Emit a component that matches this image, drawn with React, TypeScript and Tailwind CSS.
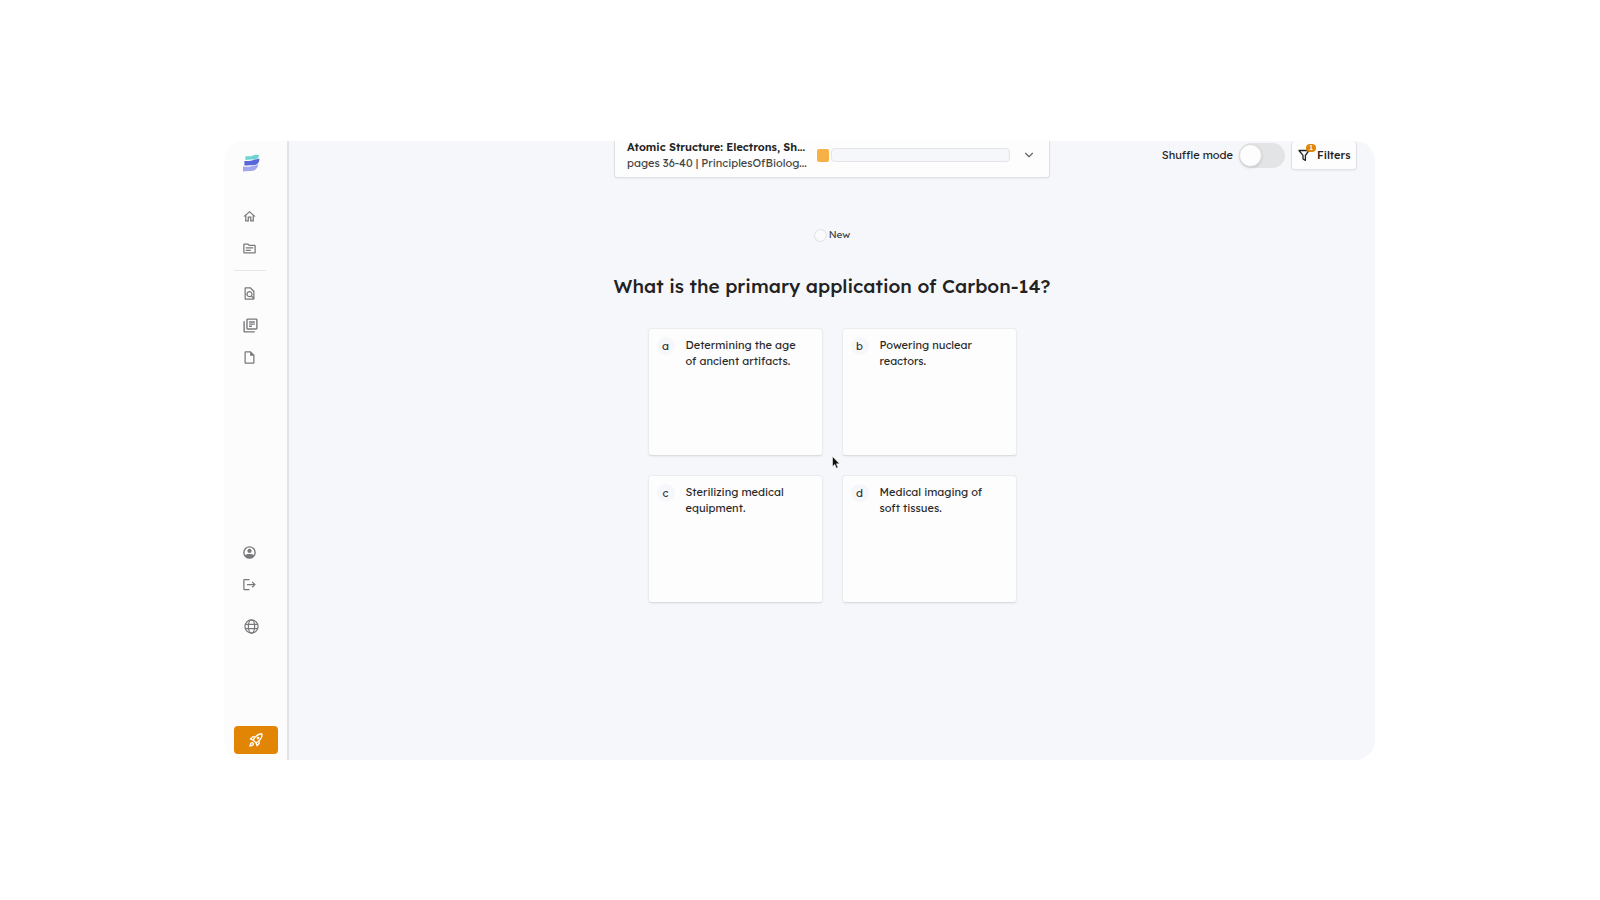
import React, { useState } from 'react';
import { ChevronDown } from 'lucide-react';
import {
  MdLogout,
  MdOutlineFindInPage,
  MdOutlineHome,
  MdOutlineInsertDriveFile,
  MdOutlineLibraryBooks,
  MdOutlineRocketLaunch,
  MdOutlineTopic,
} from 'react-icons/md';

interface Answer {
  id: string;
  text: string;
}

const ANSWERS: Answer[] = [
  { id: 'a', text: 'Determining the age of ancient artifacts.' },
  { id: 'b', text: 'Powering nuclear reactors.' },
  { id: 'c', text: 'Sterilizing medical equipment.' },
  { id: 'd', text: 'Medical imaging of soft tissues.' },
];

const Logo: React.FC = () => (
  <svg viewBox="0 0 18 18" className="w-[18px] h-[18px]" aria-hidden="true">
    <path d="M3.4 2.2C7 2.600 9 2.200 11 1.400C13 .6 15.4.4 16.8 1.2C17 3 16.4 4.700 13.6 5.200C10.5 5.700 7 5.300 3.400 6Z" fill="#6fd3d3" />
    <path d="M2.4 7C7 7.300 9 6.800 11.4 6C13.4 5.200 15.4 5 17.4 4.400C17.6 7.600 16.200 10.400 13 10.900C9.600 11.400 6 11 2.400 11.600Z" fill="#5868d8" />
    <path d="M1 12.600C5.400 13 8.400 12.800 10.800 12.100C12.800 11.500 14.800 11.200 16.400 10.200C15.800 13.400 14 16.200 11 16.700C7.800 17.200 4.400 16.800 1 17.400Z" fill="#a3a6ea" />
  </svg>
);

const AccountIcon: React.FC = () => (
  <svg viewBox="0 0 24 24" className="w-[15px] h-[15px]" fill="none" stroke="currentColor" strokeWidth="2.2" aria-hidden="true">
    <circle cx="12" cy="12" r="9" />
    <circle cx="12" cy="9.5" r="3.4" fill="currentColor" stroke="none" />
    <path d="M4.5 16.4C8 13.9 16 13.9 19.5 16.4C17.5 19.5 15 21 12 21S6.5 19.5 4.5 16.4Z" fill="currentColor" stroke="none" />
  </svg>
);

const GlobeIcon: React.FC = () => (
  <svg viewBox="0 0 24 24" className="w-[15px] h-[15px]" fill="none" stroke="currentColor" strokeWidth="2" aria-hidden="true">
    <circle cx="12" cy="12" r="10.5" />
    <ellipse cx="12" cy="12" rx="5" ry="10.5" />
    <path d="M2.5 8.5H21.5M2.5 15.5H21.5" />
  </svg>
);

const FilterIcon: React.FC = () => (
  <svg viewBox="0 0 14 14" className="w-3.5 h-3.5" fill="none" stroke="currentColor" strokeWidth="1.3" strokeLinejoin="round" aria-hidden="true">
    <path d="M1 2.5H11L7.4 7.4V12.4L5 11V7.400Z" />
  </svg>
);

interface NavButtonProps {
  label: string;
  children: React.ReactNode;
}

const NavButton: React.FC<NavButtonProps> = ({ label, children }) => (
  <button type="button" aria-label={label} className="h-8 w-8 pl-2 flex items-center hover:text-gray-900">
    {children}
  </button>
);

const Sidebar: React.FC = () => (
  <aside className="w-[65px] shrink-0 flex flex-col bg-[#fcfcfc] border-r-2 border-[#e3e3e5] text-[#77797c] pb-1.5">
    <a href="#home" aria-label="Home page" className="ml-[18px] mt-[13px] mb-7">
      <Logo />
    </a>

    <nav className="flex flex-col pl-2.5">
      <NavButton label="Home"><MdOutlineHome size={15} /></NavButton>
      <NavButton label="Folders"><MdOutlineTopic size={15} /></NavButton>
      <hr className="w-8 border-[#e6e6e7] mt-1.5 mb-1.5" />
      <NavButton label="Search documents"><MdOutlineFindInPage size={15} /></NavButton>
      <NavButton label="Library"><MdOutlineLibraryBooks size={17} /></NavButton>
      <NavButton label="Files"><MdOutlineInsertDriveFile size={15} /></NavButton>
    </nav>

    <div className="mt-auto flex flex-col pl-2.5">
      <NavButton label="Account"><AccountIcon /></NavButton>
      <NavButton label="Log out"><MdLogout size={15} /></NavButton>
      <div className="mt-2.5 pl-0.5">
        <NavButton label="Language"><GlobeIcon /></NavButton>
      </div>
    </div>

    <button
      type="button"
      aria-label="Upgrade"
      className="ml-2.5 mt-21 w-11 h-7 rounded bg-[#e28504] text-white flex items-center justify-center"
    >
      <MdOutlineRocketLaunch size={16} />
    </button>
  </aside>
);

const Header: React.FC = () => {
  const [shuffle, setShuffle] = useState(false);

  return (
    <header className="grid grid-cols-[1fr_436px_1fr] items-start">
      <button
        type="button"
        className="col-start-2 h-[37px] px-3 pb-2 flex items-center text-left bg-[#fdfdfd] rounded-b border border-t-0 border-[#dfe0e4] shadow-xs"
      >
        <span className="w-[180px] mr-2.5 text-[11px] leading-4 whitespace-nowrap">
          <span className="block font-semibold text-[#222]">Atomic Structure: Electrons, Sh...</span>
          <span className="block text-[#444]">pages 36-40 | PrinciplesOfBiolog...</span>
        </span>
        <span className="w-3 h-[13px] rounded-xs bg-[#f7b045]" />
        <span className="ml-0.5 w-[179px] h-3.5 rounded-sm bg-[#f6f7fa] border border-[#e3e4e8]" />
        <ChevronDown size={14} className="ml-3 text-[#666]" />
      </button>

      <div className="flex items-start justify-end pr-[18px] text-[11px] text-[#222]">
        <label htmlFor="shuffle" className="h-7 flex items-center">Shuffle mode</label>
        <input
          id="shuffle"
          type="checkbox"
          role="switch"
          checked={shuffle}
          onChange={(e) => setShuffle(e.target.checked)}
          className="appearance-none ml-1.5 mr-1.5 mt-0.5 w-[46px] h-[25px] rounded-full bg-[#e3e4e6] flex items-center checked:justify-end before:content-[''] before:block before:w-[23px] before:h-[23px] before:rounded-full before:bg-[#fdfdfd] before:border before:border-[#d9dadc] before:shadow-sm"
        />
        <button
          type="button"
          className="w-[66px] h-[29px] pl-1.5 flex items-center bg-[#fdfdfd] rounded border border-t-0 border-[#e2e3e6] shadow-xs font-medium"
        >
          <span className="relative mr-[5px] shrink-0">
            <FilterIcon />
            <span className="absolute left-2 -top-1 w-2.5 h-2 rounded-full bg-[#e28504] text-white text-[7px] leading-2 text-center">1</span>
          </span>
          Filters
        </button>
      </div>
    </header>
  );
};

const AnswerCard: React.FC<{ answer: Answer }> = ({ answer }) => (
  <button
    type="button"
    className="h-32 pl-2 pr-3 pt-2 flex items-start text-left bg-[#fdfdfd] rounded-sm border border-[#ebecef] border-b-[#dcdde0] shadow-xs text-[11px] hover:bg-white"
  >
    <span className="w-[18px] h-[18px] mr-[11px] rounded-full bg-[#f6f7fb] leading-[18px] text-center text-[#333]">
      {answer.id}
    </span>
    <span className="flex-1 leading-4 text-[#2a2a2a]">{answer.text}</span>
  </button>
);

const App: React.FC = () => {
  return (
    <div className="min-h-screen flex bg-white pl-56 pr-[225px] pt-[141px] pb-35 font-['Lexend','Inter',sans-serif]">
      <div className="flex-1 flex rounded-[20px] overflow-hidden">
        <Sidebar />

        <main className="flex-1 bg-[#f6f7fb]">
          <Header />

          <section className="flex flex-col items-center">
            <div className="mt-[49px] flex items-center text-[10px] leading-4 text-[#444]">
              <span className="w-[13px] h-[13px] mr-0.5 rounded-full bg-[#fafafc] border border-[#e0e1e4]" />
              New
            </div>

            <h1 className="mt-[29px] text-[19px] leading-7 font-medium text-[#222]">
              What is the primary application of Carbon-14?
            </h1>

            <div className="relative mt-7 grid grid-cols-[175px_175px] gap-[19px]">
              {ANSWERS.map((answer) => (
                <AnswerCard key={answer.id} answer={answer} />
              ))}
              {/* Mouse pointer */}
              <svg viewBox="0 0 8 13" className="absolute left-1/2 top-32 w-2 h-[13px]" aria-hidden="true">
                <path d="M.5.5V10.5L2.8 8.4L4.4 12.2L6 11.5L4.4 7.8H7.5Z" fill="#111" stroke="#fff" strokeWidth=".5" />
              </svg>
            </div>
          </section>
        </main>
      </div>
    </div>
  );
};

export default App;
